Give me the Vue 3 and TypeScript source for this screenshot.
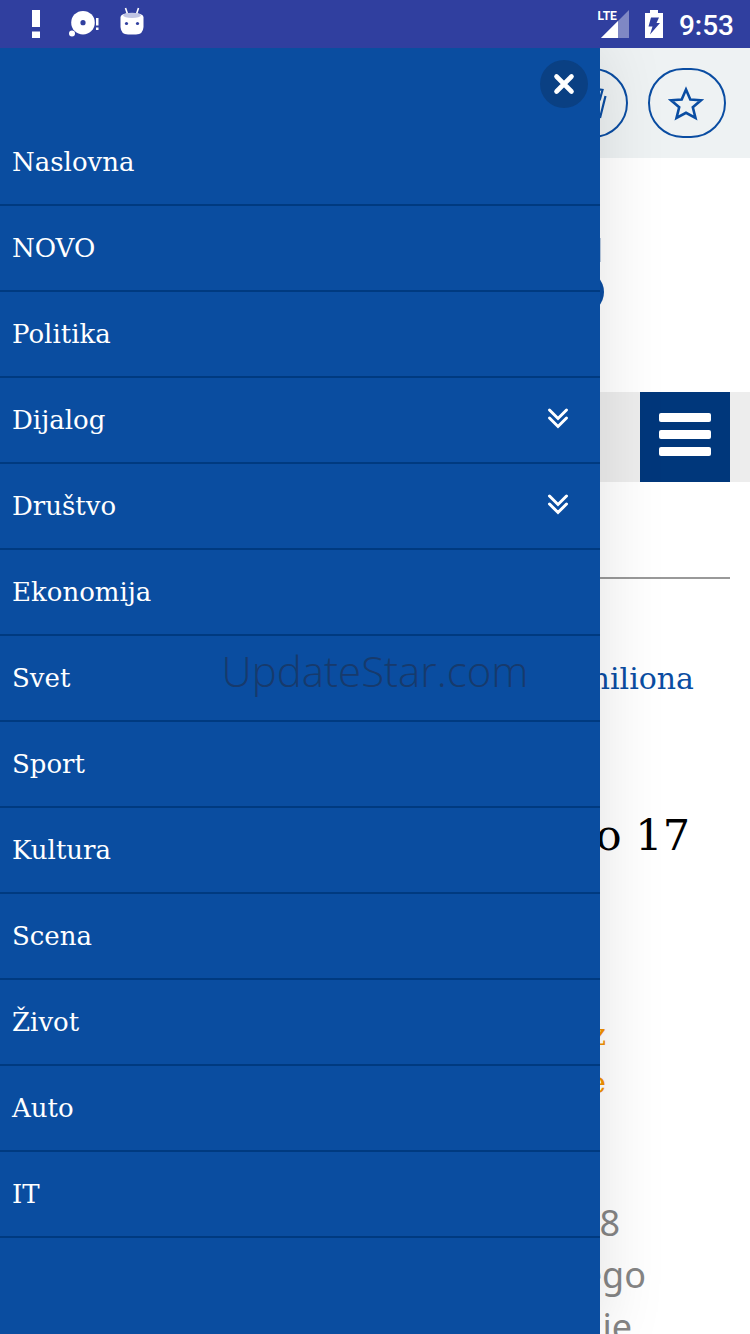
<script setup lang="ts">
interface MenuItem {
  label: string
  expandable?: boolean
}

const items: MenuItem[] = [
  { label: 'Naslovna' },
  { label: 'NOVO' },
  { label: 'Politika' },
  { label: 'Dijalog', expandable: true },
  { label: 'Društvo', expandable: true },
  { label: 'Ekonomija' },
  { label: 'Svet' },
  { label: 'Sport' },
  { label: 'Kultura' },
  { label: 'Scena' },
  { label: 'Život' },
  { label: 'Auto' },
  { label: 'IT' },
]
</script>

<template>
  <div class="screen">
    <header class="status">
      <div class="status-group notices">
        <svg class="alert" viewBox="0 0 8 28" aria-hidden="true">
          <path d="M0 0H8V17H0ZM0 21.500H8V28H0Z" fill="#fff" />
        </svg>
        <svg class="disc" viewBox="0 0 32 28" aria-hidden="true">
          <circle cx="15" cy="12.700" r="11.800" fill="#fff" />
          <circle cx="15" cy="12.700" r="2.600" fill="#303f9f" />
          <circle cx="4" cy="23.500" r="3" fill="#fff" />
          <path d="M28 8H30.500V15.500H28ZM28 17.500H30.500V20H28Z" fill="#fff" />
        </svg>
        <svg class="robot" viewBox="0 0 24 28" aria-hidden="true">
          <path d="M5.500 0L7.500 6M18.500 0L16.500 6" stroke="#fff" stroke-width="1.600" />
          <path d="M0.500 9Q1 5 12 5T23.500 9V19Q23 26.500 16 26.500H8Q1 26.500 0.500 19Z" fill="#fff" />
          <ellipse cx="12" cy="7.300" rx="9" ry="2.600" fill="#c0c5e4" />
          <circle cx="6.500" cy="15.500" r="1.600" fill="#303f9f" />
          <circle cx="17.500" cy="15.500" r="1.600" fill="#303f9f" />
        </svg>
      </div>
      <div class="status-group">
        <span class="network">
          <span class="lte">LTE</span>
          <svg class="signal" viewBox="0 0 28 28" aria-hidden="true">
            <path d="M28 0V28H0Z" fill="#7f88c4" />
            <path d="M17 11V28H0Z" fill="#fff" />
          </svg>
        </span>
        <svg class="battery" viewBox="0 0 18 28" aria-hidden="true">
          <path d="M5 0H13V3H18V28H0V3H5Z" fill="#fff" />
          <path d="M6 7.500H14L11.500 13H15L5 24.500L7.500 16.500H3.500Z" fill="#303f9f" />
        </svg>
        <time class="clock">9:53</time>
      </div>
    </header>

    <div class="stage">
      <main class="page">
        <div class="toolbar">
          <button class="pill" type="button" aria-label="Uredi">
            <svg viewBox="0 0 36 36" aria-hidden="true">
              <path d="M12 32L25 4L31.500 5L29 14L18 34L11 35ZM34.500 11L29 33" fill="none" stroke="#0a4da2" stroke-width="2.200" />
            </svg>
          </button>
          <button class="pill" type="button" aria-label="Sačuvaj">
            <svg viewBox="0 0 36 36" aria-hidden="true">
              <path d="M17 4.500L21.300 14.500L32 15.300L23.800 22.300L26.500 33L17 27.800L7.500 33L10.200 22.300L2 15.300L12.700 14.500Z" fill="none" stroke="#0a4da2" stroke-width="2.600" />
            </svg>
          </button>
        </div>
        <div class="brand">
          <svg viewBox="0 0 60 70" aria-hidden="true">
            <rect x="30" y="0" width="26.600" height="24" fill="#8fabd0" />
            <ellipse cx="40" cy="54" rx="20" ry="21" fill="#0a4da2" />
          </svg>
        </div>
        <div class="navbar">
          <button class="burger" type="button" aria-label="Meni">
            <svg viewBox="0 0 52 48" aria-hidden="true">
              <rect width="52" height="9" rx="2" fill="#fff" />
              <rect y="17" width="52" height="9" rx="2" fill="#fff" />
              <rect y="34" width="52" height="9" rx="2" fill="#fff" />
            </svg>
          </button>
        </div>
        <article class="story">
          <a class="topic" href="#">miliona</a>
          <h1 class="headline">lo 17</h1>
          <p class="tags">z<br />e</p>
          <p class="body">
            <span class="line first">8</span>
            <span class="line second">ego</span>
            <span class="line third">je</span>
          </p>
        </article>
      </main>

      <aside class="drawer">
        <div class="drawer-head">
          <button class="close" type="button" aria-label="Zatvori">
            <svg viewBox="0 0 20 20" aria-hidden="true">
              <path d="M2.500 2.500L17.500 17.500M17.500 2.500L2.500 17.500" stroke="#fff" stroke-width="4.600" stroke-linecap="round" />
            </svg>
          </button>
        </div>
        <nav>
          <ul class="menu">
            <li v-for="item in items" :key="item.label" class="row">
              <a class="link" href="#">{{ item.label }}</a>
              <button v-if="item.expandable" class="expand" type="button" :aria-label="item.label">
                <svg viewBox="0 0 20 22" aria-hidden="true">
                  <path d="M1.500 1L10 9.500L18.500 1M1.500 9L10 17.500L18.500 9" fill="none" stroke="#fff" stroke-width="3" stroke-linecap="round" />
                </svg>
              </button>
            </li>
          </ul>
        </nav>
      </aside>
      <div class="watermark">UpdateStar.com</div>
    </div>
  </div>
</template>

<style>
body {
  margin: 0;
}
</style>

<style scoped>
.screen {
  display: flex;
  flex-direction: column;
  height: 100vh;
  overflow: hidden;
  background: #fff;
  font-family: "DejaVu Serif", serif;
}

svg {
  display: block;
  overflow: visible;
}

button {
  padding: 0;
  border: 0;
  cursor: pointer;
}

a {
  text-decoration: none;
}

.status {
  position: relative;
  z-index: 2;
  flex: none;
  display: flex;
  justify-content: space-between;
  height: 48px;
  padding: 0 16px 0 32px;
  background: #303f9f;
  color: #fff;
  font-family: Roboto, sans-serif;
}

.status-group {
  display: flex;
  align-items: center;
  gap: 16px;
}

.notices {
  gap: 20px;
}

.alert {
  width: 8px;
  height: 28px;
}

.disc {
  width: 32px;
  height: 28px;
  margin-left: 8px;
}

.robot {
  width: 24px;
  height: 28px;
  margin-bottom: 4px;
}

.network {
  display: flex;
}

.lte {
  margin-right: -16px;
  z-index: 1;
  font-size: 12px;
  font-weight: 700;
  line-height: 12px;
}

.signal {
  width: 28px;
  height: 28px;
}

.battery {
  width: 18px;
  height: 28px;
}

.clock {
  padding-top: 3px;
  font-size: 28px;
  font-weight: 500;
  line-height: 45px;
}

.stage {
  position: relative;
  flex: 1;
  min-height: 0;
}

.page {
  height: 100%;
  overflow: hidden;
}

.toolbar {
  display: flex;
  justify-content: flex-end;
  gap: 20px;
  padding: 20px 24px;
  background: #eef2f3;
}

.pill {
  display: grid;
  place-items: center;
  width: 78px;
  height: 70px;
  border: 2px solid #0a4da2;
  border-radius: 35px;
  background: transparent;
}

.pill svg {
  width: 36px;
  height: 36px;
}

.brand {
  box-sizing: border-box;
  display: flex;
  justify-content: flex-end;
  height: 234px;
  padding: 80px 146px 0 0;
}

.brand svg {
  width: 60px;
  height: 70px;
}

.navbar {
  display: flex;
  justify-content: flex-end;
  padding-right: 20px;
  background: #ededed;
}

.burger {
  display: grid;
  place-items: center;
  width: 90px;
  height: 90px;
  background: #00377b;
}

.burger svg {
  width: 52px;
  height: 48px;
}

.story {
  display: flex;
  flex-direction: column;
  align-items: flex-end;
  margin: 95px 20px 0;
  border-top: 2px solid #999;
  text-align: right;
}

.topic {
  margin: 76px 36px 0 0;
  color: #0a4da2;
  font-size: 30px;
  line-height: 48px;
}

.headline {
  margin: 96px 40px 0 0;
  font-size: 43px;
  font-weight: 400;
  line-height: 72px;
}

.tags {
  margin: 140px 124px 0 0;
  color: #f39200;
  font-size: 30px;
  line-height: 48px;
}

.body {
  display: flex;
  flex-direction: column;
  align-items: flex-end;
  margin: 90px 0 0;
  color: #858585;
  font-family: "Noto Sans", sans-serif;
  font-size: 36px;
  line-height: 52px;
}

.first {
  margin-right: 110px;
}

.second {
  margin-right: 84px;
}

.third {
  margin-right: 98px;
}

.drawer {
  position: absolute;
  inset: 0 20% 0 0;
  background: #0a4da0;
  box-shadow: 0 0 64px rgba(0, 0, 0, 0.12);
}

.drawer-head {
  display: flex;
  justify-content: flex-end;
  padding: 12px;
}

.close {
  display: grid;
  place-items: center;
  width: 48px;
  height: 48px;
  border-radius: 50%;
  background: #0a4083;
}

.close svg {
  width: 20px;
  height: 20px;
}

.menu {
  margin: 0;
  padding: 0;
  list-style: none;
}

.row {
  display: flex;
  align-items: center;
  border-bottom: 2px solid #003a80;
}

.link {
  flex: 1;
  padding: 0 12px;
  color: #fff;
  font-size: 26px;
  line-height: 84px;
}

.expand {
  display: grid;
  place-items: center;
  width: 84px;
  height: 84px;
  background: transparent;
}

.expand svg {
  width: 20px;
  height: 22px;
}

.watermark {
  position: absolute;
  inset: 0;
  display: grid;
  place-items: center;
  padding-bottom: 42px;
  color: #173a6c;
  font-family: "Open Sans", sans-serif;
  font-size: 42px;
  font-weight: 360;
  pointer-events: none;
}
</style>
